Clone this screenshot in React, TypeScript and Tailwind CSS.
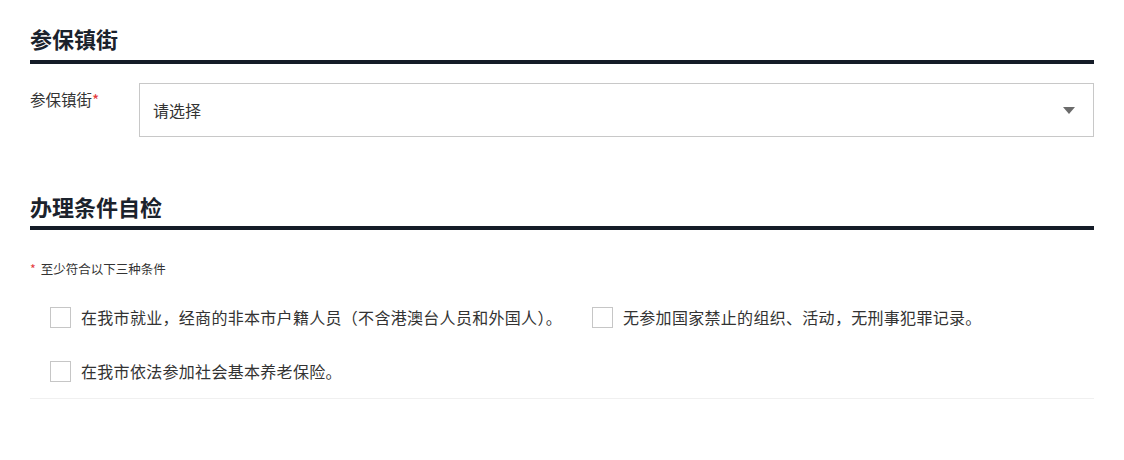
const FONT = {
   fontFamily: '"Noto Sans CJK SC", "Noto Sans", sans-serif',
};

const conditions = [
   '在我市就业，经商的非本市户籍人员（不含港澳台人员和外国人）。',
   '无参加国家禁止的组织、活动，无刑事犯罪记录。',
   '在我市依法参加社会基本养老保险。',
];

const SectionTitle = ({ title, className = '' }: { title: string, className?: string }) => (
   <h2 className={`text-[22px] leading-[28px] font-bold text-[#1b222c] border-b-4 border-[#151c27] ${className}`}>
      {title}
   </h2>
);

const Checkbox = ({ label }: { label: string }) => (
   <label className='flex items-center h-[54px] cursor-pointer'>
      <span className='w-[21px] h-[21px] border border-[#c6c6c6] bg-white mr-[10px] shrink-0' />
      <span className='text-[16px] tracking-[0.3px] text-[#333]'>{label}</span>
   </label>
);

export default function App() {
   return (
      <div className='bg-white w-[1124px] h-[460px] px-[30px] pt-[24px]' style={FONT}>
         <SectionTitle title='参保镇街' className='pb-[8px]' />
         <div className='flex mt-[19px]'>
            <div className='w-[109px] pt-[5px] text-[15.5px] leading-[22px] text-[#333]'>
               参保镇街<span className='text-[#e4393c]'>*</span>
            </div>
            <div className='flex-1 h-[54px] border border-[#c8c8c8] flex items-center justify-between pl-[13px] pr-[18px]'>
               <span className='text-[16px] text-[#333]'>请选择</span>
               <svg width='12' height='7' viewBox='0 0 12 7'>
                  <path d='M0 0 H12 L6 7 Z' fill='#6b6b6b' />
               </svg>
            </div>
         </div>
         <SectionTitle title='办理条件自检' className='mt-[55px] pb-[6px]' />
         <div className='mt-[29px] text-[12.5px] leading-[20px] text-[#333]'>
            <span className='text-[#e4393c] mr-[5px]'>*</span>至少符合以下三种条件
         </div>
         <div className='mt-[11px] border-b border-[#f0f0f0]'>
            <div className='flex flex-wrap gap-x-[30px] pl-[20px]'>
               {conditions.map((c) => <Checkbox key={c} label={c} />)}
            </div>
         </div>
      </div>
   );
}
